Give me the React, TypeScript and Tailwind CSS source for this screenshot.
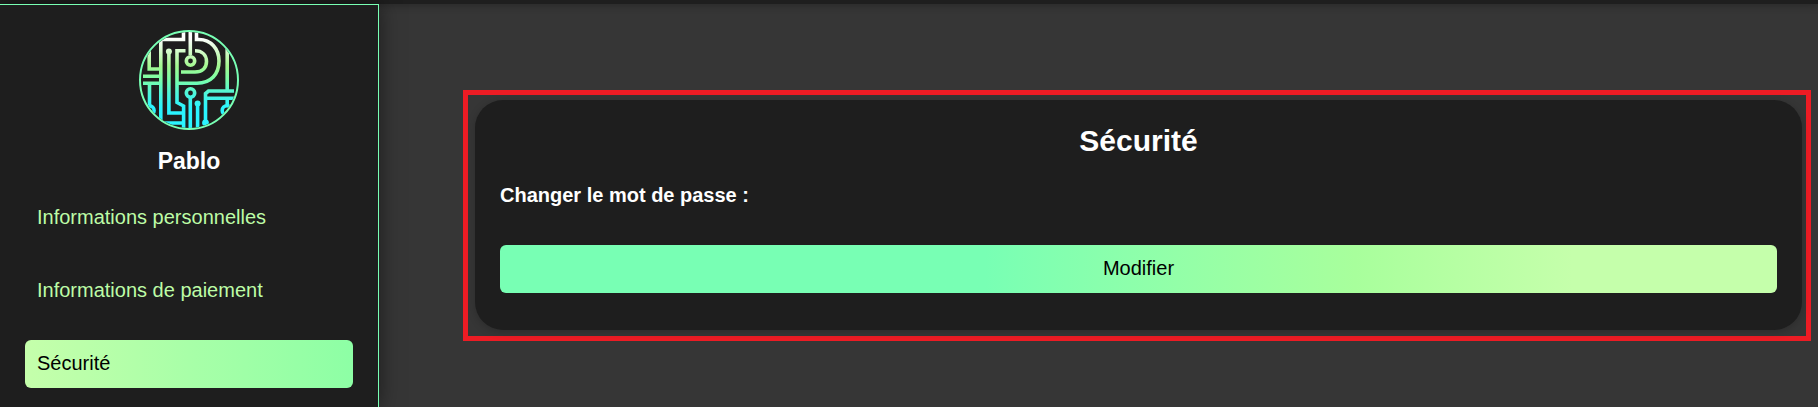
import React from "react";

const navItems = [
  { label: "Informations personnelles", href: "#informations", active: false },
  { label: "Informations de paiement", href: "#paiement", active: false },
  { label: "Sécurité", href: "#securite", active: true },
];

function Avatar() {
  return (
    <svg viewBox="0 0 100 100" className="h-[100px] w-[100px]" role="img" aria-label="Avatar">
      <defs>
        <linearGradient id="trace" gradientUnits="userSpaceOnUse" x1="0" y1="8" x2="0" y2="78">
          <stop offset="0" stopColor="#ffffff" />
          <stop offset="0.4" stopColor="#a4f890" />
          <stop offset="0.58" stopColor="#7dffa6" />
          <stop offset="0.8" stopColor="#4df5dc" />
          <stop offset="1" stopColor="#2af4ff" />
        </linearGradient>
        <clipPath id="disc">
          <circle cx="50" cy="50" r="48" />
        </clipPath>
      </defs>
      <g clipPath="url(#disc)">
        <g fill="none" stroke="url(#trace)" strokeWidth="3.6">
          <path d="M44.5 0 V9.5 H21.8 V100" />
          <path d="M51.3 0 V25" />
          <path d="M57.5 0 V9.5 H60 C72 9.5 80 19 80 31 C80 44 72 53.2 58 53.2 H38" />
          <path d="M46.5 20.8 H38 V72.5 L44.6 76 V100" />
          <path d="M56 20.8 C63 20.8 67.5 25 67.5 31.5 C67.5 38 63 42 56 42 H42" />
          <path d="M10.2 0 V39 H21.8" />
          <path d="M4 46.3 H21.8" />
          <path d="M4 53.3 H21.8" />
          <path d="M10.5 53.3 V75" />
          <path d="M29.9 22 V83 H44.6" />
          <path d="M24 93 H44.6" />
          <path d="M51.3 67 V100" />
          <path d="M58.6 73 V100" />
          <path d="M66.5 92 V63.5 L69.5 61 H95" />
          <path d="M66.5 68.3 H95" />
          <path d="M88.2 0 V60" />
          <path d="M88.2 68 V75" />
          <circle cx="51.5" cy="31" r="4.2" />
          <circle cx="51.5" cy="63" r="4.2" />
          <circle cx="10.5" cy="80.5" r="4.6" />
          <circle cx="88" cy="80.5" r="4.8" />
        </g>
        <g fill="url(#trace)">
          <circle cx="29.9" cy="21.5" r="3" />
          <circle cx="58.6" cy="73.5" r="3" />
          <circle cx="66.5" cy="92.8" r="3.4" />
        </g>
      </g>
      <circle cx="50" cy="50" r="49" fill="none" stroke="#78ffb4" strokeWidth="2" />
    </svg>
  );
}

function Sidebar() {
  return (
    <aside className="relative w-[379px] shrink-0 border-t border-r border-[#78ffb4] bg-[#1e1e1e] px-[25px] pt-[25px] shadow-[0_0_20px_rgba(0,0,0,0.5)]">
      <div className="flex flex-col items-center">
        <Avatar />
        <h2 className="mt-4 text-[23px] leading-[30px] font-bold text-white">Pablo</h2>
      </div>
      <nav aria-label="Compte" className="mt-[18px] flex flex-col gap-[25px]">
        {navItems.map((item) => (
          <a
            key={item.label}
            href={item.href}
            aria-current={item.active ? "page" : undefined}
            className={
              item.active
                ? "rounded-md bg-linear-to-r from-[#c5ffab] via-[#a8ffa8] to-[#8dffa5] px-3 pt-[11px] pb-[13px] text-xl leading-6 text-black"
                : "rounded-md px-3 pt-[11px] pb-[13px] text-xl leading-6 text-[#bdfca6]"
            }
          >
            {item.label}
          </a>
        ))}
      </nav>
    </aside>
  );
}

export default function App() {
  return (
    <div className="flex min-h-screen flex-col overflow-hidden bg-[#363636] font-['Liberation_Sans',Arial,sans-serif]">
      <header className="h-1 shrink-0 bg-[#1e1e1e] shadow-[0_0_8px_rgba(0,0,0,0.5)]" />
      <div className="flex flex-1">
        <Sidebar />
        <main className="min-w-0 flex-1 pt-[86px] pr-[7px] pl-[84px]">
          <div className="border-5 border-[#ed1c24] pt-[5px] pr-1 pb-[6px] pl-[7px]">
            <section className="rounded-[28px] bg-[#1e1e1e] px-[25px] pt-[23px] pb-[37px] shadow-[0_2px_8px_rgba(0,0,0,0.2)]">
              <h1 className="text-center text-3xl leading-9 font-bold text-white">Sécurité</h1>
              <p id="password-label" className="mt-6 text-xl leading-6 font-bold text-white">
                Changer le mot de passe :
              </p>
              <button
                type="button"
                aria-describedby="password-label"
                className="mt-[38px] block w-full rounded-md bg-linear-to-r from-[#78ffb4] from-38% via-[#a8ff9c] via-67% to-[#c5ffab] to-84% pt-[11px] pb-[13px] text-xl leading-6 text-black"
              >
                Modifier
              </button>
            </section>
          </div>
        </main>
      </div>
    </div>
  );
}
